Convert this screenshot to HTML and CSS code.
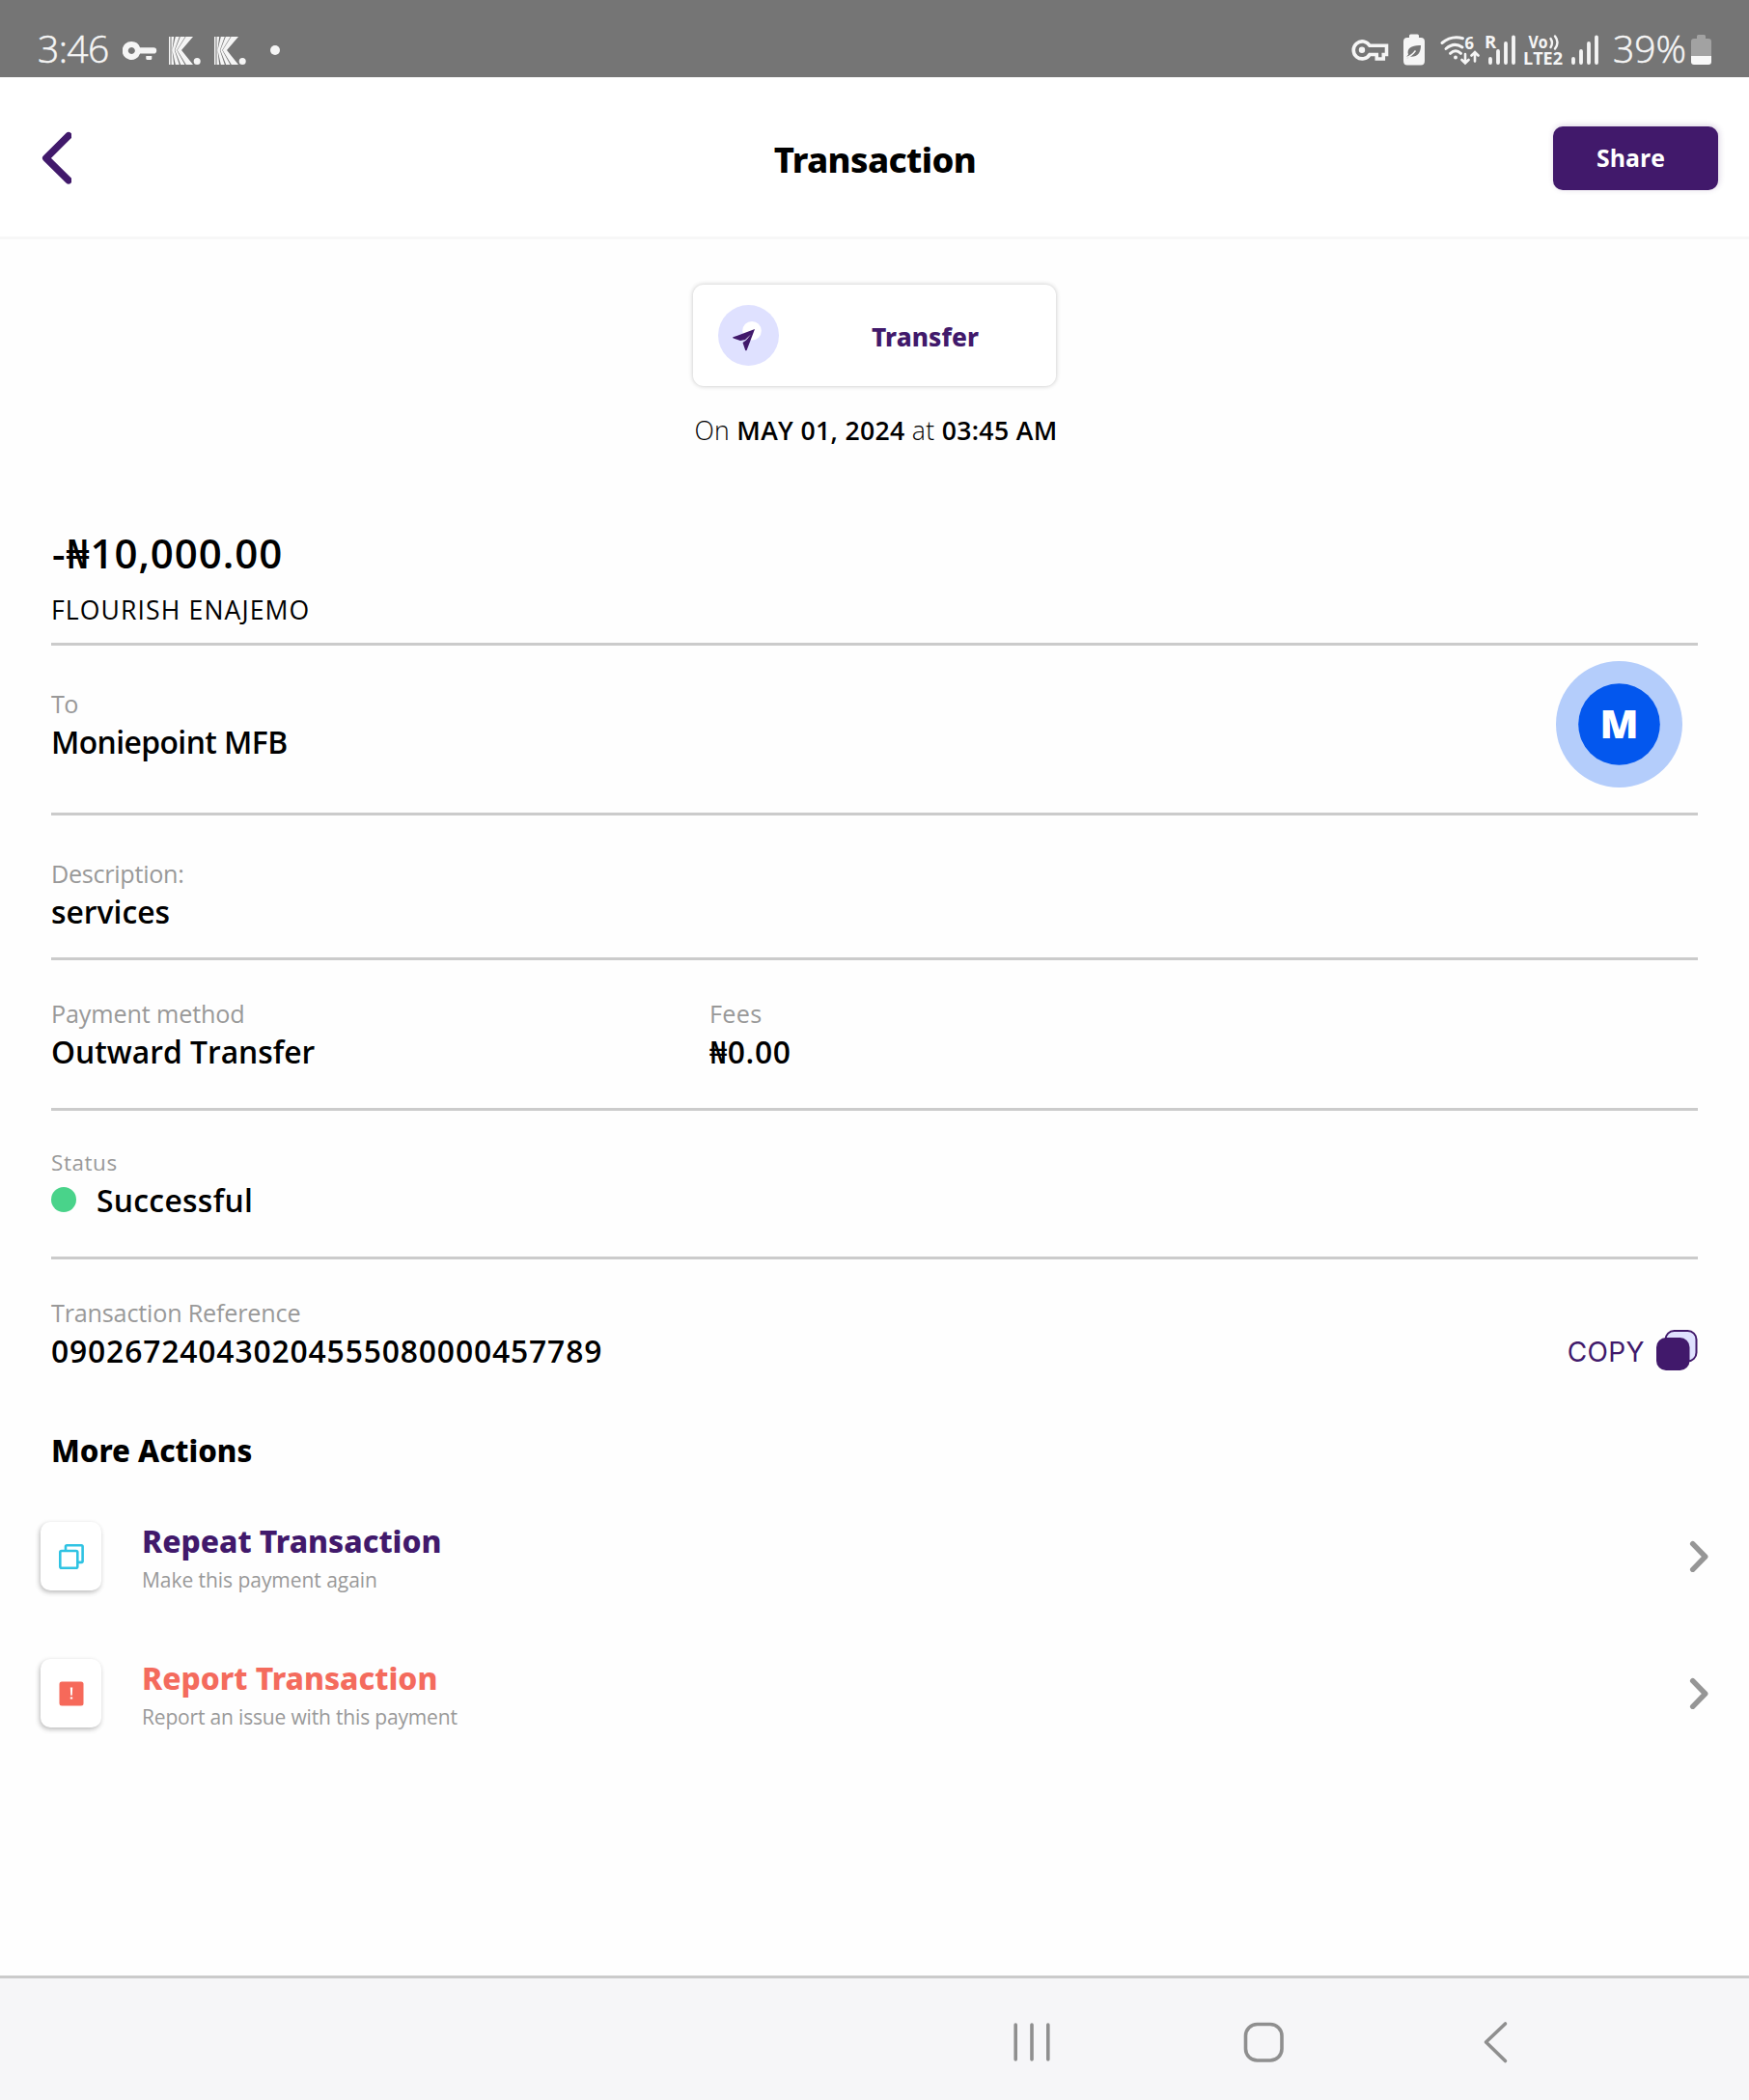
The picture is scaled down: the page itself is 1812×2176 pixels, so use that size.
FILE: index.html
```
<!DOCTYPE html>
<html lang="en">
<head>
<meta charset="utf-8">
<title>Transaction</title>
<link rel="stylesheet" href="styles.css">
</head>
<body>
<div class="screen">
  <div class="statusbar">
    <span class="clock">3:46</span>
    <svg class="status-left" width="165" height="80" viewBox="127 0 165 80" fill="#f5f5f5">
      <path fill-rule="evenodd" d="M136.300 43a9.500 9.500 0 0 1 8.800 6.300h14a3 3 0 0 1 0 6.200h-14A9.500 9.500 0 1 1 136.300 43zm0 6a3.500 3.500 0 1 0 .01 0z"/>
      <path d="M151.300 58h6v2.500q0 1.500-1.500 1.500h-3q-1.500 0-1.500-1.500z"/>
      <g id="k">
        <path d="M175 38h1.500v29H175zM177.500 38h2.700l-1.800 14 1.800 15h-2.700zM181.800 38h4l-5 14 5 15h-4l-3.300-15zM186.800 38h5l-8.600 14 8.300 15h-4.300l-5.900-15zM192.500 38h7.500l-12 14L200 67h-7.200l-9.100-15z"/>
        <circle cx="204.200" cy="63.500" r="3.500"/>
      </g>
      <use href="#k" x="47"/>
      <circle cx="285" cy="52" r="5"/>
    </svg>
    <svg class="status-right" width="262" height="80" viewBox="1398 0 262 80" fill="#f5f5f5">
      <path d="M1419 47.300h17.500v9.200h-3.200V61h-7v-4.500h-7.300a9 9 0 1 1 0-9.200z" fill="none" stroke="#f5f5f5" stroke-width="3.600"/>
      <circle cx="1411" cy="51.700" r="3.200"/>
      <path d="M1460 39v-2q0-1.500 1.500-1.500h7q1.500 0 1.500 1.500v2h2q4 0 4 4v20q0 4.500-4 4.500h-14q-4 0-4-4.500V43q0-4 4-4z"/>
      <path d="M1472 47c-9-.5-15 3-13 9.500l-2 2.500 1 1.500 2-2c8 1 12-3 12-11.500z" fill="#757575"/>
      <path d="M1457 59.500q5-1 9.500-7" fill="none" stroke="#f5f5f5" stroke-width="1.400"/>
      <g fill="none" stroke="#f5f5f5" stroke-width="3" stroke-linecap="round">
        <path d="M1494 44.500q9.500-8 21.500-4.800M1498 50.500q8.500-7.500 17-1.500M1502.500 55.300q5.500-5 11 0"/>
        <path d="M1518 56v9M1514.500 62l3.500 3.500 3.500-3.500M1528 63.500v-9M1524.500 57.500l3.500-3.500 3.500 3.500" stroke-width="2.600"/>
        <path d="M1606.500 40q3 4.500 0 9M1611 37.500q5 6.500 0 13" stroke-width="2.400"/>
        <path d="M1544 61v4M1552 53v12M1560 45v20M1568 38.500v26.500M1630 61v4M1638 53v12M1646 45v20M1654 38.500v26.500" stroke-width="3.800"/>
      </g>
      <circle cx="1508" cy="59.500" r="2"/>
      <g class="tiny">
        <text x="1517.500" y="51" textLength="9.500" lengthAdjust="spacingAndGlyphs">6</text>
        <text x="1538" y="50">R</text>
        <text x="1583.500" y="49.500" textLength="20" lengthAdjust="spacingAndGlyphs">Vo</text>
        <text x="1578" y="67" textLength="41" lengthAdjust="spacingAndGlyphs">LTE2</text>
      </g>
    </svg>
    <span class="percent">39%</span>
    <svg class="battery" width="21" height="80" viewBox="1752 0 21 80">
      <path d="M1758 40v-2.500q0-1.500 1.500-1.500h6q1.500 0 1.500 1.500V40h3q3 0 3 3v15h-21V43q0-3 3-3z" fill="#a2a2a2"/>
      <path d="M1752 58h21v6q0 3-3 3h-15q-3 0-3-3z" fill="#f8f8f8"/>
    </svg>
  </div>

  <header class="header">
    <svg class="back" width="34" height="56" viewBox="0 0 34 56" fill="none" stroke="#41196b" stroke-width="7.400" stroke-linecap="round" stroke-linejoin="round"><path d="M31 5.700 7.700 28.800l23.300 23"/></svg>
    <h1 class="title">Transaction</h1>
    <button class="share">Share</button>
  </header>

  <main class="content">
    <div class="type-card">
      <svg width="63" height="63" viewBox="744 316 63 63">
        <circle cx="775.500" cy="347.500" r="31.500" fill="#dfe1ff"/>
        <circle cx="779" cy="342.800" r="9.800" fill="#fff"/>
        <path d="M782 341l-22.500 8.300q-1 .7.300 1.200l7.200 2.500 5-1 6-5.500-5 6-3.500 2.500 2.700 8q.8.800 1.500-.2z" fill="#41196b"/>
      </svg>
      <span class="type-name">Transfer</span>
    </div>
    <p class="date">On <b>MAY 01, 2024</b> at <b>03:45 AM</b></p>

    <section class="row row-amount">
      <div class="amount">-₦10,000.00</div>
      <div class="person">FLOURISH ENAJEMO</div>
    </section>

    <section class="row row-to">
      <div class="field"><div class="label to">To</div><div class="value bank">Moniepoint MFB</div></div>
      <svg class="bank-logo" width="131" height="131" viewBox="0 0 131 131">
        <circle cx="65.500" cy="65.500" r="65.500" fill="#b4cdfb"/>
        <circle cx="65.500" cy="65.500" r="42.300" fill="#0357ee"/>
        <text class="bank-letter" x="45.500" y="80" textLength="40" lengthAdjust="spacingAndGlyphs">M</text>
      </svg>
    </section>

    <section class="row row-desc">
      <div class="field"><div class="label desc-label">Description:</div><div class="value">services</div></div>
    </section>

    <section class="row row-method">
      <div class="field method"><div class="label method-label">Payment method</div><div class="value">Outward Transfer</div></div>
      <div class="field"><div class="label fee-label">Fees</div><div class="value fee">₦0.00</div></div>
    </section>

    <section class="row row-status">
      <div class="field">
        <div class="label status-label">Status</div>
        <div class="value status"><i class="dot"></i>Successful</div>
      </div>
    </section>

    <section class="row row-ref">
      <div class="field"><div class="label">Transaction Reference</div><div class="value number">090267240430204555080000457789</div></div>
      <div class="copy">
        <span class="copy-text">COPY</span>
        <svg width="43" height="42" viewBox="0 0 43 42">
          <rect x="9.500" y="1" width="32" height="31.500" rx="9" fill="#dfe1ff" stroke="#41196b" stroke-width="2"/>
          <rect x="0" y="8" width="34.500" height="34" rx="10" fill="#41196b"/>
        </svg>
      </div>
    </section>

    <h2 class="more">More Actions</h2>
  </main>

  <div class="action">
    <span class="tile">
      <svg width="26" height="26" viewBox="0 0 26 26" fill="none" stroke="#2fc3e3" stroke-width="2.600" stroke-linejoin="round"><rect x="1.300" y="7" width="18" height="17.700" rx="1.500"/><path d="M7 7V2.600q0-1.300 1.300-1.300h15q1.300 0 1.300 1.300v15q0 1.300-1.300 1.300H19.300"/></svg>
    </span>
    <div class="action-text"><div class="action-title">Repeat Transaction</div><div class="action-sub">Make this payment again</div></div>
    <svg class="chevron" width="20" height="33" viewBox="0 0 20 33"><path d="M3.700 3.700 16.700 17 3.700 30.300"/></svg>
  </div>
  <div class="action report">
    <span class="tile">
      <svg width="26" height="26" viewBox="0 0 26 26"><rect x=".5" y=".5" width="25" height="25" rx="2.500" fill="#f6695a"/><path d="M11.800 6.500h2.400l-.4 8.300h-1.600zM11.800 16.500h2.400v2h-2.400z" fill="#fff"/></svg>
    </span>
    <div class="action-text"><div class="action-title">Report Transaction</div><div class="action-sub long">Report an issue with this payment</div></div>
    <svg class="chevron" width="20" height="33" viewBox="0 0 20 33"><path d="M3.700 3.700 16.700 17 3.700 30.300"/></svg>
  </div>

  <nav class="navbar">
    <svg width="60" height="60" viewBox="0 0 60 60"><path d="M13.200 12v36M30 12v36M46.800 12v36"/></svg>
    <svg width="60" height="60" viewBox="0 0 60 60"><rect x="11.500" y="11.500" width="37.500" height="37.500" rx="12"/></svg>
    <svg width="60" height="60" viewBox="0 0 60 60"><path d="M40.500 11 20.500 30l20 19.500"/></svg>
  </nav>
</div>
</body>
</html>
```
FILE: styles.css
```
* { box-sizing: border-box; margin: 0; padding: 0; }

body {
  background: #fefefe;
  color: #000;
  font-family: "Open Sans", "Noto Sans", sans-serif;
}

.screen {
  width: 1812px;
  height: 2176px;
  display: flex;
  flex-direction: column;
  overflow: hidden;
}

svg { display: block; flex: none; }

/* Status bar */
.statusbar {
  height: 80px;
  flex: none;
  display: flex;
  background: #757575;
  color: #f5f5f5;
  padding: 0 39px 0 39px;
}
.clock, .percent {
  font-size: 39px;
  font-weight: 300;
  -webkit-text-stroke: .5px #f5f5f5;
  line-height: 100px;
  height: 80px;
  white-space: nowrap;
}
.clock { width: 88px; letter-spacing: -.6px; }
.status-right { margin-left: auto; }
.percent { width: 92px; padding-left: 11px; letter-spacing: 0; }
.tiny { font: 700 18.500px "Open Sans", sans-serif; }

/* Header */
.header {
  height: 168px;
  flex: none;
  display: grid;
  grid-template-columns: 1fr auto 1fr;
  align-items: center;
  background: #fff;
  border-bottom: 3px solid #f7f7f7;
  padding: 0 32px 0 40px;
}
.title {
  font: 800 36.400px/50px "Noto Sans", sans-serif;
  letter-spacing: -.6px;
  padding: 4px 7px 0 0;
}
.share {
  justify-self: end;
  width: 171px;
  height: 66px;
  margin-top: 3px;
  padding: 0 10px 2px 0;
  border: 0;
  border-radius: 10px;
  background: #41196b;
  color: #fff;
  font: 700 24.800px/62px "Open Sans", sans-serif;
  box-shadow: 1px -1px 6px rgba(65, 25, 107, .2);
}

/* Details */
.content { padding: 47px 53px 0; }
.type-card {
  width: 376px;
  height: 105px;
  margin: 0 auto;
  padding-left: 26px;
  display: flex;
  align-items: center;
  border-radius: 11px;
  background: #fff;
  box-shadow: 0 0 5px rgba(0, 0, 0, .23);
}
.type-name {
  margin-left: 96px;
  padding-top: 2px;
  color: #41196b;
  font: 800 26.200px/40px "Noto Sans", sans-serif;
  letter-spacing: .1px;
}
.date {
  margin: 26px 0 -1px;
  padding-left: 3px;
  text-align: center;
  font-size: 26.600px;
  line-height: 40px;
  font-weight: 300;
  letter-spacing: .3px;
}
.date b { font-weight: 600; letter-spacing: .35px; }

.row { border-bottom: 3px solid #cbcbcb; display: flex; }
.row-amount { height: 204px; flex-direction: column; padding-top: 80px; }
.amount { font-size: 42px; line-height: 56px; font-weight: 600; letter-spacing: .96px; padding-left: 1px; }
.person { margin-top: 12px; font-size: 26.600px; line-height: 38px; letter-spacing: 1.100px; }
.row-to { height: 176px; padding: 43px 16px 0 0; justify-content: space-between; }
.bank-logo { margin-top: -27px; }
.bank-letter { font: 800 40px "Open Sans", sans-serif; fill: #fff; }
.row-desc { height: 150px; padding-top: 43px; }
.row-method { height: 156px; padding-top: 38px; }
.method { width: 682px; }
.row-status { height: 154px; padding-top: 37px; }
.row-ref { height: 116px; padding-top: 38px; border: 0; justify-content: space-between; }

.label { font-size: 25.200px; line-height: 34px; color: #999; letter-spacing: -.2px; }
.to { letter-spacing: -.6px; }
.desc-label { letter-spacing: -.3px; }
.method-label { letter-spacing: -.15px; }
.fee-label { letter-spacing: .3px; }
.status-label { font-size: 22.400px; letter-spacing: .6px; }
.value { margin: 1px 0 -1px; font-size: 31.800px; line-height: 44px; font-weight: 600; }
.bank { letter-spacing: -.56px; }
.fee { letter-spacing: .6px; }
.number { letter-spacing: .86px; }
.status { margin: 0; display: flex; align-items: center; letter-spacing: .3px; }
.dot { width: 26px; height: 26px; margin: -2px 21px 0 0; border-radius: 50%; background: #49d38a; }

.copy { display: flex; align-self: flex-end; align-items: center; height: 42px; margin-bottom: 1px; gap: 12px; color: #41196b; }
.copy-text { padding-top: 3px; font: 400 28px/44px Inter, sans-serif; letter-spacing: .4px; }

.more { margin-top: 60px; font: 800 31.200px/44px "Noto Sans", sans-serif; }

/* Actions */
.action { display: flex; align-items: center; height: 77px; margin-top: 49px; padding: 0 42px; }
.report { margin-top: 65px; }
.tile {
  width: 63px;
  height: 71px;
  display: flex;
  align-items: center;
  justify-content: center;
  border-radius: 10px;
  background: #fff;
  box-shadow: -1px 2px 5px rgba(0, 0, 0, .28);
}
.action-text { margin-left: 42px; padding-top: 2px; }
.action-title { font: 800 31.800px/44px "Noto Sans", sans-serif; color: #41196b; }
.report .action-title { color: #f46b5d; }
.action-sub { margin-top: 3px; font-size: 21px; line-height: 30px; color: #999; letter-spacing: -.05px; }
.action-sub.long { letter-spacing: -.17px; }
.chevron { margin-left: auto; fill: none; stroke: #969696; stroke-width: 5.500; stroke-linecap: round; stroke-linejoin: round; }

/* System navigation */
.navbar {
  height: 129px;
  flex: none;
  margin-top: auto;
  display: flex;
  gap: 180px;
  padding: 36px 0 0 1039px;
  border-top: 3px solid #cbcbcb;
  background: #f6f6f8;
}
.navbar svg { fill: none; stroke: #8f8f8f; stroke-width: 3.600; stroke-linecap: round; stroke-linejoin: round; }
```
